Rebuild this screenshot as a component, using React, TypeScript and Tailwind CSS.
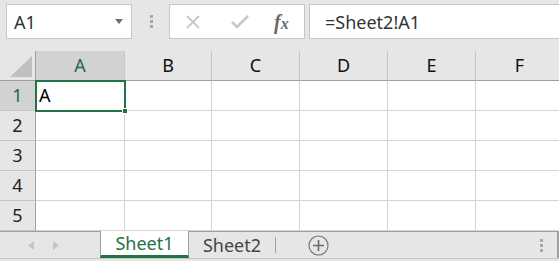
import { Fragment } from "react";

const COLS = ["A", "B", "C", "D", "E", "F"];
const ROWS = [1, 2, 3, 4, 5];
const FONT = { fontFamily: '"Noto Sans", "Noto Sans CJK JP", sans-serif' };

function Dots({ className }: { className: string }) {
  return (
    <div className={`flex flex-col gap-[2px] ${className}`}>
      <span className="block w-[3px] h-[3px] bg-[#a6a6a6]" />
      <span className="block w-[3px] h-[3px] bg-[#a6a6a6]" />
      <span className="block w-[3px] h-[3px] bg-[#a6a6a6]" />
    </div>
  );
}

export default function App() {
  return (
    <div className="w-[559px] h-[261px] overflow-hidden bg-[#e6e6e6] text-[#222]" style={FONT}>
      {/* formula bar */}
      <div className="flex h-[51px] pt-[4px]">
        <div className="ml-[6px] w-[126px] h-[35px] border border-[#c6c6c6] bg-white flex items-center justify-between pl-[7px] pr-[8px]">
          <span className="text-[18px] text-[#333] leading-none">A1</span>
          <svg width="8" height="5" viewBox="0 0 8 5">
            <path d="M0 0h8L4 5z" fill="#6f6f6f" />
          </svg>
        </div>
        <Dots className="ml-[18px] mt-[11px]" />
        <div className="ml-[16px] w-[136px] h-[35px] border border-[#c6c6c6] bg-white flex items-center">
          <svg className="ml-[16px]" width="14" height="14" viewBox="0 0 14 14">
            <path d="M1 1l12 12M13 1L1 13" stroke="#c8c8c8" strokeWidth="1.8" />
          </svg>
          <svg className="ml-[31px]" width="18" height="14" viewBox="0 0 18 14">
            <path d="M1 7l5 5L17 1" stroke="#c8c8c8" strokeWidth="2.6" fill="none" />
          </svg>
          <span
            className="ml-[25px] text-[20px] italic font-bold text-[#6a6a6a] leading-none"
            style={{ fontFamily: '"Liberation Serif", serif' }}
          >
            f<span className="text-[16px]">x</span>
          </span>
        </div>
        <div className="ml-[4px] flex-1 h-[35px] border border-r-0 border-[#c6c6c6] bg-white flex items-center pl-[15px]">
          <span className="text-[18px] text-[#333] leading-none">=Sheet2!A1</span>
        </div>
      </div>

      {/* grid */}
      <div className="grid grid-cols-[36px_89px_87px_88px_88px_88px_88px] grid-rows-[30px_30px_30px_30px_30px_30px] relative">
        <div className="bg-[#e6e6e6] border-r border-b border-[#9f9f9f] relative">
          <svg className="absolute right-[3px] bottom-[3px]" width="22" height="21" viewBox="0 0 22 21">
            <path d="M22 0v21H0z" fill="#c0c0c0" />
          </svg>
        </div>
        {COLS.map((c) => (
          <div
            key={c}
            className={`border-r border-b border-[#9f9f9f] border-r-[#c6c6c6] flex items-center justify-center text-[18px] ${
              c === "A" ? "bg-[#d2d2d2] text-[#1e6b46] border-b-[#217346]" : "bg-[#e6e6e6] text-[#111]"
            }`}
          >
            {c}
          </div>
        ))}
        {ROWS.map((r) => (
          <Fragment key={r}>
            <div
              className={`border-r border-b border-[#c6c6c6] border-r-[#9f9f9f] flex items-center justify-center text-[18px] ${
                r === 1 ? "bg-[#d2d2d2] text-[#1e6b46] border-r-[#217346]" : "bg-[#e6e6e6] text-[#222]"
              }`}
            >
              {r}
            </div>
            {COLS.map((c) => (
              <div
                key={c}
                className="bg-white border-r border-b border-[#d4d4d4] flex items-center pl-[3px] text-[18px] text-black"
              >
                {r === 1 && c === "A" ? "A" : ""}
              </div>
            ))}
          </Fragment>
        ))}
        {/* active cell */}
        <div className="absolute left-[35px] top-[29px] w-[91px] h-[32px] border-2 border-[#217346] pointer-events-none">
          <span className="absolute -right-[4px] -bottom-[4px] w-[6px] h-[6px] bg-[#217346] border border-white" />
        </div>
      </div>

      {/* sheet tabs */}
      <div className="h-[28px] border-t border-[#9f9f9f] flex items-stretch relative border-b border-b-[#c6c6c6]">
        <div className="w-[100px] flex items-center pl-[28px] gap-[19px]">
          <svg width="6" height="9" viewBox="0 0 6 9">
            <path d="M6 0v9L0 4.5z" fill="#c4c4c4" />
          </svg>
          <svg width="6" height="9" viewBox="0 0 6 9">
            <path d="M0 0v9l6-4.5z" fill="#c4c4c4" />
          </svg>
        </div>
        <div className="w-[89px] -mt-px bg-white border-x border-[#9f9f9f] border-b-[3px] border-b-[#217346] flex items-center justify-center text-[18px] text-[#217346] leading-none">
          Sheet1
        </div>
        <div className="w-[86px] flex items-center justify-center text-[18px] text-[#444] leading-none">
          Sheet2
        </div>
        <div className="w-px h-[16px] self-center bg-[#9f9f9f]" />
        <div className="ml-[32px] flex items-center">
          <svg width="21" height="21" viewBox="0 0 21 21">
            <circle cx="10.5" cy="10.5" r="9.5" stroke="#7a7a7a" strokeWidth="1.2" fill="none" />
            <path d="M10.5 5v11M5 10.5h11" stroke="#6a6a6a" strokeWidth="1.6" />
          </svg>
        </div>
        <div className="flex-1" />
        <Dots className="self-center mr-[14px]" />
        <div className="w-[2px] bg-[#9f9f9f]" />
      </div>
    </div>
  );
}
